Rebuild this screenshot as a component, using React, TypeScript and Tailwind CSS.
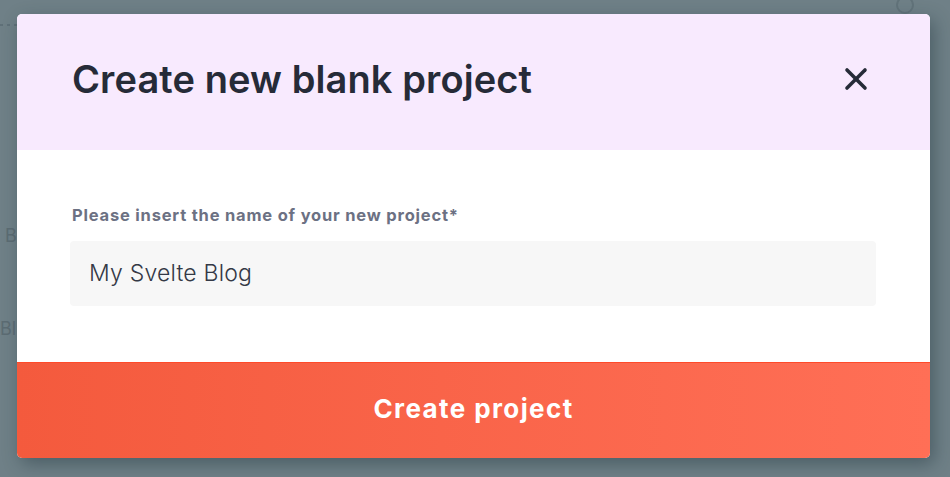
import { X } from "lucide-react";

const CreateProjectModal = () => {
  return (
    <div className="flex w-[913px] h-[444px] flex-col overflow-hidden rounded-[5px] bg-white shadow-[4px_6px_18px_rgba(30,50,60,0.45)]">
      <div className="flex h-[136px] items-center justify-between bg-[#f8eafe] pb-[6px] pl-[55px] pr-[56px]">
        <h1 className="text-[38px] font-semibold tracking-[0.1px] text-[#262b38]">
          Create new blank project
        </h1>
        <button type="button" className="text-[#262b38]">
          <X size={36} strokeWidth={2.4} />
        </button>
      </div>
      <div className="flex flex-1 flex-col px-[53px] pt-[53px]">
        <label className="pl-[2px] text-[16.5px] font-bold tracking-[0.8px] text-[#6c7183]">
          Please insert the name of your new project*
        </label>
        <input
          className="mt-[13px] h-[65px] w-[806px] rounded-[4px] bg-[#f7f7f7] px-[19px] text-[23px] font-light tracking-[0.2px] text-[#343946] outline-none"
          defaultValue="My Svelte Blog"
        />
      </div>
      <button
        type="button"
        className="h-[96px] border-t border-[#ff4a2a] bg-gradient-to-r from-[#f45a3d] to-[#ff6f56] pb-[4px] text-[26px] font-bold tracking-[1.4px] text-white"
      >
        Create project
      </button>
    </div>
  );
};

export default function App() {
  return (
    <div className="relative h-[477px] w-[950px] overflow-hidden bg-[#6f8087] font-['Inter',sans-serif]">
      {/* faded page behind the overlay */}
      <div className="flex items-center gap-[4px] pl-0 pt-[24px]">
        <span className="h-[2px] w-[3px] bg-[#5f7078]" />
        <span className="h-[2px] w-[3px] bg-[#5f7078]" />
        <span className="h-[2px] w-[3px] bg-[#5f7078]" />
      </div>
      <div className="absolute right-[36px] top-[-4px] h-[18px] w-[18px] rounded-full border-2 border-[#62737a]" />
      <div className="pl-[5px] pt-[196px] text-[18px] text-[#5c6c73]">B</div>
      <div className="pl-0 pt-[66px] text-[18px] text-[#5c6c73]">Bl</div>

      <div className="absolute inset-0 pl-[17px] pt-[14px]">
        <CreateProjectModal />
      </div>
    </div>
  );
}
